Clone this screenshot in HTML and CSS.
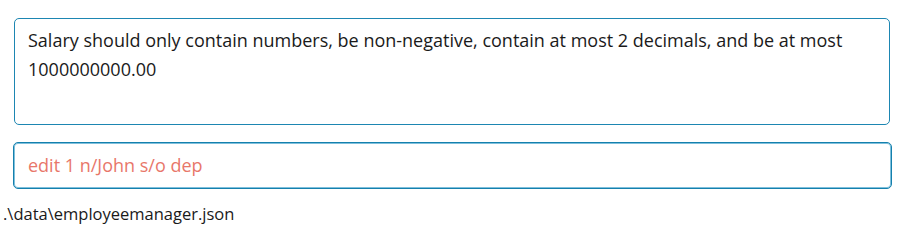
FILE: index.html
```html
<!DOCTYPE html>
<html>
<head>
<meta charset="utf-8">
<link rel="stylesheet" href="styles.css">
</head>
<body>
<div class="window">
  <div class="result">Salary should only contain numbers, be non-negative, contain at most 2 decimals, and be at most 1000000000.00</div>
  <div class="command">edit 1 n/John s/o dep</div>
  <div class="status">.\data\employeemanager.json</div>
</div>
</body>
</html>
```
FILE: styles.css
```css
html, body {
  margin: 0;
  padding: 0;
  background: #ffffff;
}
.window {
  width: 904px;
  height: 233px;
  background: #ffffff;
  display: flex;
  flex-direction: column;
  font-family: "Open Sans", "Noto Sans", sans-serif;
  font-size: 18px;
  overflow: hidden;
}
.result {
  box-sizing: border-box;
  margin: 18px 0 0 14px;
  width: 876px;
  height: 107px;
  border: 1.5px solid #1d86b2;
  border-radius: 5px;
  padding: 7px 30px 0 13px;
  line-height: 29px;
  color: #1a1a1a;
}
.command {
  box-sizing: border-box;
  margin: 17px 0 0 13px;
  width: 879px;
  height: 47px;
  border: 1px solid #1580ad;
  box-shadow: inset 0 0 0 1px #7fc0dc;
  border-radius: 5px;
  padding: 1px 0 0 14px;
  line-height: 43px;
  color: #e8776a;
}
.status {
  margin: 14px 0 0 3px;
  font-size: 16.5px;
  line-height: 22px;
  color: #1a1a1a;
}
```
